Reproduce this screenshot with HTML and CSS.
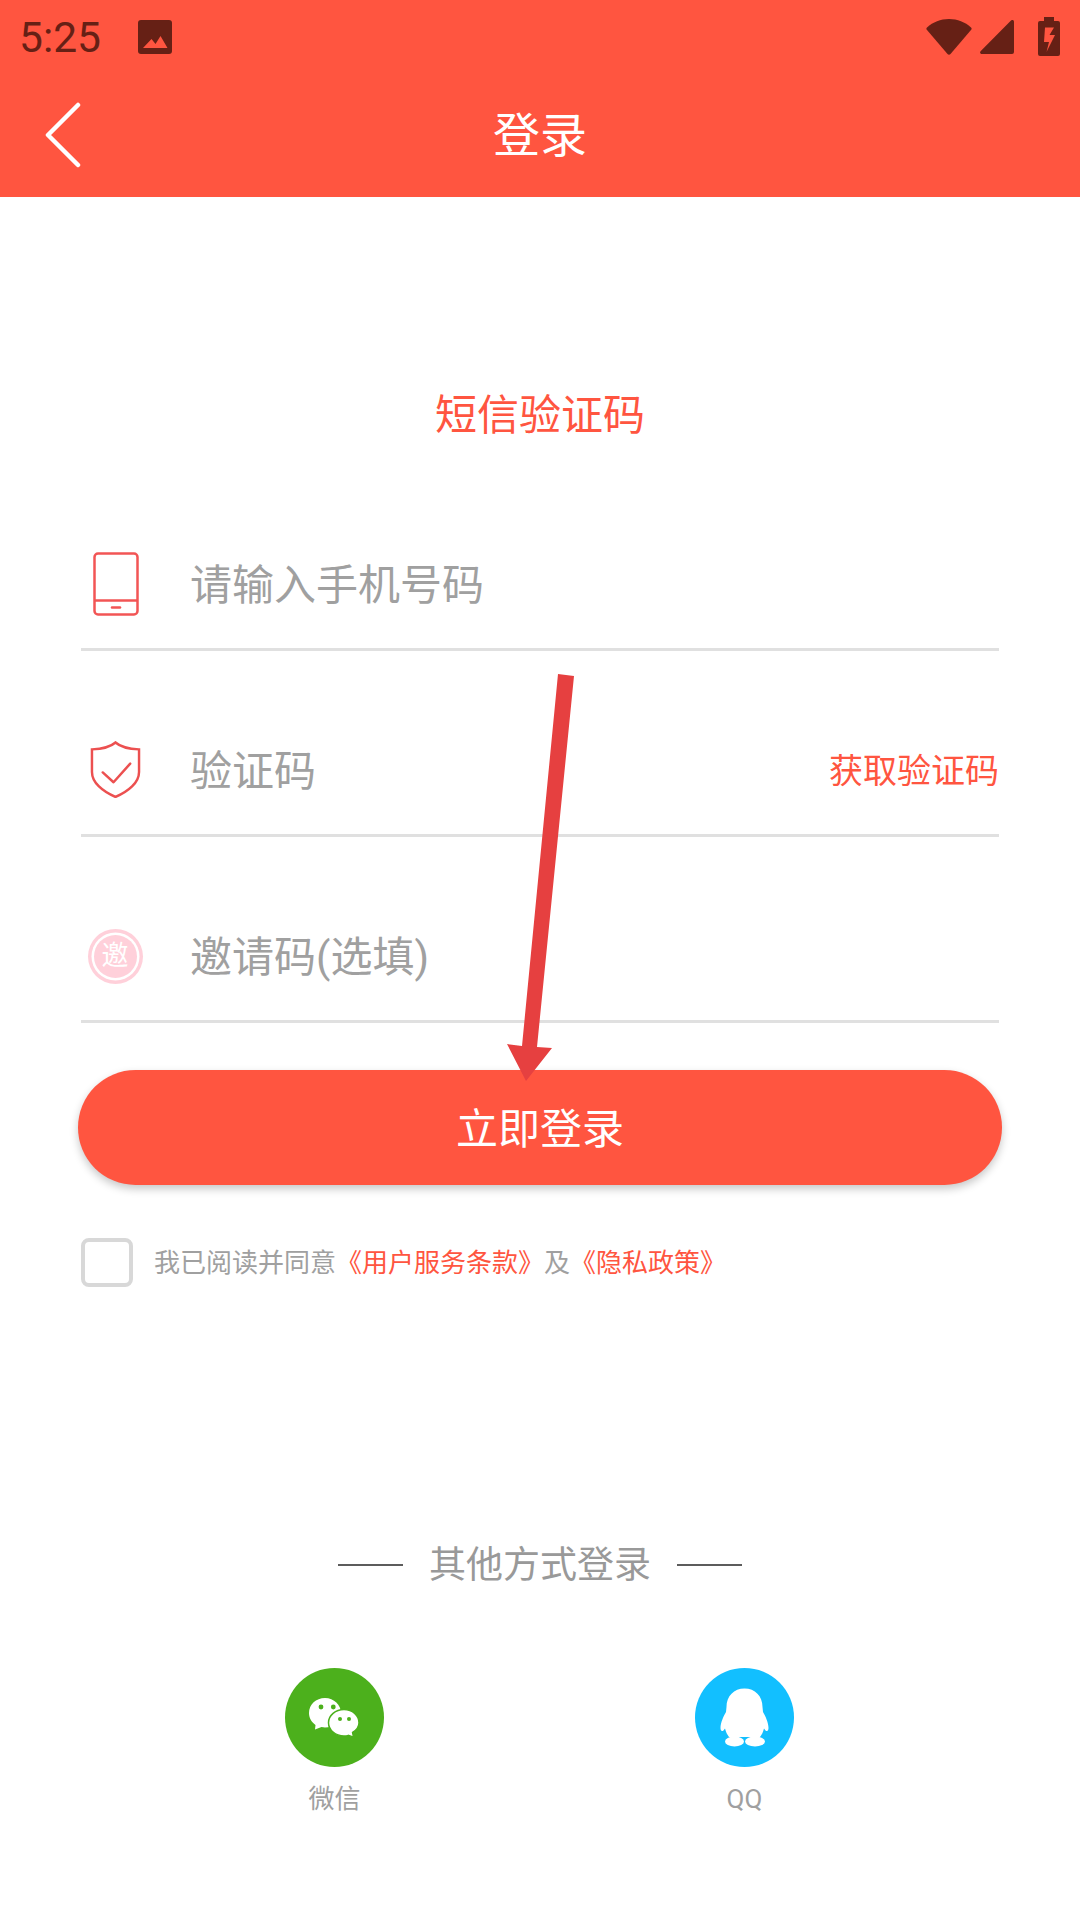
FILE: index.html
```html
<!DOCTYPE html>
<html lang="zh">
<head>
<meta charset="utf-8">
<title>登录</title>
<link rel="stylesheet" href="styles.css">
</head>
<body>
<div class="page">
  <header class="head">
    <div class="status">
      <span class="clock">5:25</span>
      <svg class="pic" viewBox="0 0 34 34"><path fill="#662015" d="M3 0h28a3 3 0 0 1 3 3v28a3 3 0 0 1-3 3H3a3 3 0 0 1-3-3V3a3 3 0 0 1 3-3z"/><path fill="#ff5540" d="M5 28l8.500-9 4 5 5-8 7 12z"/></svg>
      <span class="status-fill"></span>
      <svg class="wifi" viewBox="0 0 46 36"><path fill="#662015" d="M1 8.500C7 3 14.500 0 23 0s16 3 22 8.500c.8.800.8 1.500.2 2.300L24.500 35c-.8.900-2.200.9-3 0L.8 10.800c-.6-.8-.6-1.500.2-2.300z"/></svg>
      <svg class="signal" viewBox="0 0 34 34"><path fill="#662015" d="M31 .5c1.500-1.200 3-.5 3 1.500v30a2 2 0 0 1-2 2H2c-2 0-2.500-1.800-1.200-3z"/></svg>
      <svg class="battery" viewBox="0 0 22 39"><path fill="#662015" fill-rule="evenodd" d="M6 0h10v4h4a2 2 0 0 1 2 2v31a2 2 0 0 1-2 2H2a2 2 0 0 1-2-2V6a2 2 0 0 1 2-2h4zM7 10.500L6 25h5l-2.500 10L17 18h-5.500L16 10.500z"/></svg>
    </div>
    <div class="bar">
      <svg class="back" viewBox="0 0 40 68"><path fill="none" stroke="#fff" stroke-width="4.500" stroke-linecap="round" stroke-linejoin="round" d="M33 4L3 34l30 30"/></svg>
      <h1 class="bar-title">登录</h1>
    </div>
  </header>

  <main class="main">
    <h2 class="heading">短信验证码</h2>

    <div class="row">
      <span class="row-icon">
        <svg class="ic-phone" viewBox="0 0 46 64"><g fill="none" stroke="#f25555" stroke-width="2.500"><rect x="1.500" y="1.500" width="43" height="61" rx="3.500"/><path d="M1.500 48.500h43"/></g><path stroke="#f25555" stroke-width="2.500" stroke-linecap="round" d="M19 55.500h8"/></svg>
      </span>
      <span class="ph">请输入手机号码</span>
    </div>

    <div class="row">
      <span class="row-icon">
        <svg class="ic-shield" viewBox="0 0 52 58"><g fill="none" stroke="#ec5050" stroke-width="2.500"><path d="M26 1.500c4.500 4 11 6.500 24 7v23c0 11-11 20-24 25.500C13 51.500 2 42.500 2 31.500v-23c13-.5 19.500-3 24-7z"/><path stroke-linecap="round" stroke-linejoin="round" d="M13 32l11 10 17-19"/></g></svg>
      </span>
      <span class="ph">验证码</span>
      <span class="get-code">获取验证码</span>
    </div>

    <div class="row">
      <span class="row-icon">
        <span class="ic-invite"><span class="ic-invite-disc">邀</span></span>
      </span>
      <span class="ph">邀请码(选填)</span>
    </div>

    <button class="login" type="button">立即登录</button>

    <div class="agree">
      <span class="check"></span>
      <p class="agree-text">我已阅读并同意<span class="link">《用户服务条款》</span>及<span class="link">《隐私政策》</span></p>
    </div>

    <div class="other">
      <span class="rule"></span>
      <span class="other-text">其他方式登录</span>
      <span class="rule"></span>
    </div>

    <div class="social">
      <div class="social-item">
        <svg class="disc" viewBox="0 0 99 99">
          <circle cx="49.500" cy="49.500" r="49.500" fill="#4cb01c"/>
          <path fill="#fff" d="M40 30c-9 0-16 6.500-16 15 0 5 2.500 9 6.500 12L30 61.500l6.500-2.500c1.200.3 2.400.5 3.500.5 9 0 16-6.500 16-14.500S49 30 40 30z"/>
          <path fill="#fff" stroke="#4cb01c" stroke-width="1.500" d="M59 41.500c-8.500 0-15.500 6-15.500 13.200S50.500 68 59 68c1.500 0 3-.2 4.300-.6l5.200 1.800-.9-4.700c3.800-2.400 6.400-6 6.400-9.800 0-7.200-6.500-13.200-15-13.200z"/>
          <g fill="#4cb01c"><circle cx="36" cy="39" r="2.400"/><circle cx="48.300" cy="39" r="2.400"/><circle cx="55" cy="51" r="2"/><circle cx="64" cy="51" r="2"/></g>
        </svg>
        <span class="social-label">微信</span>
      </div>
      <div class="social-item">
        <svg class="disc" viewBox="0 0 99 99">
          <circle cx="49.500" cy="49.500" r="49.500" fill="#12bfff"/>
          <path fill="#fff" d="M49.500 20.500C39 20.500 31.500 28 31.500 39L31 44c-2.500 4-5.500 11-5.500 16 0 4 2.500 4 4.500.5 1 3.500 2 6 4 8.500h31c2-2.500 3-5 4-8.500 2 3.500 4.500 3.500 4.500-.5 0-5-3-12-5.500-16l-.5-5c0-11-7.500-18.500-18-18.500z"/>
          <ellipse cx="39.500" cy="73.500" rx="9.500" ry="5" fill="#fff"/>
          <ellipse cx="60" cy="73.500" rx="10" ry="5" fill="#fff"/>
        </svg>
        <span class="social-label">QQ</span>
      </div>
    </div>
  </main>

  <svg class="arrow" viewBox="0 0 67 407"><path fill="#e64040" d="M51 0L67 2 30 373 45 374 19 407 0 370 15 372z"/></svg>
</div>
</body>
</html>
```
FILE: styles.css
```css
* { box-sizing: border-box; }
html, body { margin: 0; padding: 0; }
body {
  background: #fff;
  font-family: Roboto, "Noto Sans CJK SC", sans-serif;
}
.page {
  position: relative;
  width: 1080px;
  height: 1920px;
  overflow: hidden;
  background: #fff;
}
.head { background: #ff5540; height: 197px; }
.status {
  height: 73px;
  display: flex;
  align-items: center;
  padding: 0 20px 0 19px;
}
.clock { font-size: 42.500px; font-weight: 400; line-height: 71px; padding-top: 2px; color: #662015; width: 119px; }
.pic { width: 34px; height: 34px; }
.status-fill { flex: 1; }
.wifi { width: 46px; height: 36px; margin-right: 8px; }
.signal { width: 34px; height: 34px; margin-top: 1px; margin-right: 24px; }
.battery { width: 22px; height: 39px; }
.bar {
  position: relative;
  height: 124px;
  display: flex;
  align-items: center;
  justify-content: center;
}
.back { position: absolute; left: 45px; top: 28px; width: 40px; height: 68px; }
.bar-title { margin: 0; padding-top: 2px; font-size: 47px; font-weight: 400; color: #fff; line-height: 122px; }
.main { display: flex; flex-direction: column; }
.heading {
  margin: 189px 0 76px;
  font-size: 42px;
  line-height: 60px;
  font-weight: 400;
  color: #ff5540;
  text-align: center;
}
.row {
  width: 918px;
  height: 129px;
  margin: 0 0 57px 81px;
  display: flex;
  align-items: center;
  border-bottom: 3px solid #e0e0e0;
}
.row-icon {
  width: 110px;
  height: 126px;
  display: flex;
  align-items: center;
  justify-content: center;
  padding: 0 40px 2px 0;
  flex: none;
}
.ic-phone { width: 46px; height: 64px; flex: none; }
.ic-shield { width: 51px; height: 57px; flex: none; margin: 0 0 1px -2px; }
.ic-invite {
  width: 55px;
  height: 55px;
  flex: none;
  margin-left: -2px;
  border-radius: 50%;
  background: #ffd0da;
  display: flex;
  align-items: center;
  justify-content: center;
}
.ic-invite-disc {
  width: 43px;
  height: 43px;
  border-radius: 50%;
  background: #ffd0da;
  box-shadow: 0 0 0 2.500px #fff;
  color: #fff;
  font-size: 27px;
  line-height: 43px;
  text-align: center;
}
.ph { flex: 1; margin-left: -1px; padding-top: 2px; font-size: 42px; color: #a0a0a0; line-height: 124px; }
.get-code { font-size: 34px; color: #ff5540; margin: 0 0 6px; }
.login {
  width: 924px;
  height: 115px;
  margin: -10px 0 0 78px;
  padding: 0 0 4px;
  border: 0;
  border-radius: 58px;
  background: #ff5540;
  color: #fff;
  font: inherit;
  font-size: 42px;
  box-shadow: 0 4px 8px rgba(0, 0, 0, .22);
}
.agree {
  margin: 53px 0 0 81px;
  display: flex;
  align-items: center;
  gap: 21px;
}
.check {
  width: 52px;
  height: 49px;
  border: 4px solid #d8d8d8;
  border-radius: 8px;
  flex: none;
}
.agree-text { margin: 0; padding-top: 2px; font-size: 26px; line-height: 47px; color: #a0a0a0; }
.link { color: #ff5540; }
.other {
  margin-top: 248px;
  height: 60px;
  display: flex;
  align-items: center;
  justify-content: center;
  gap: 26px;
}
.rule { width: 65px; height: 2px; background: #5c5c5c; }
.other-text { padding-top: 2px; font-size: 37px; color: #999; line-height: 58px; }
.social {
  margin-top: 73px;
  padding-right: 1px;
  display: flex;
  justify-content: center;
  gap: 210px;
}
.social-item {
  width: 200px;
  display: flex;
  flex-direction: column;
  align-items: center;
}
.disc { width: 99px; height: 99px; display: block; }
.social-label { margin-top: 14px; font-size: 26px; line-height: 36px; color: #a0a0a0; }
.arrow {
  position: absolute;
  left: 507px;
  top: 674px;
  width: 67px;
  height: 407px;
  overflow: visible;
}
```
